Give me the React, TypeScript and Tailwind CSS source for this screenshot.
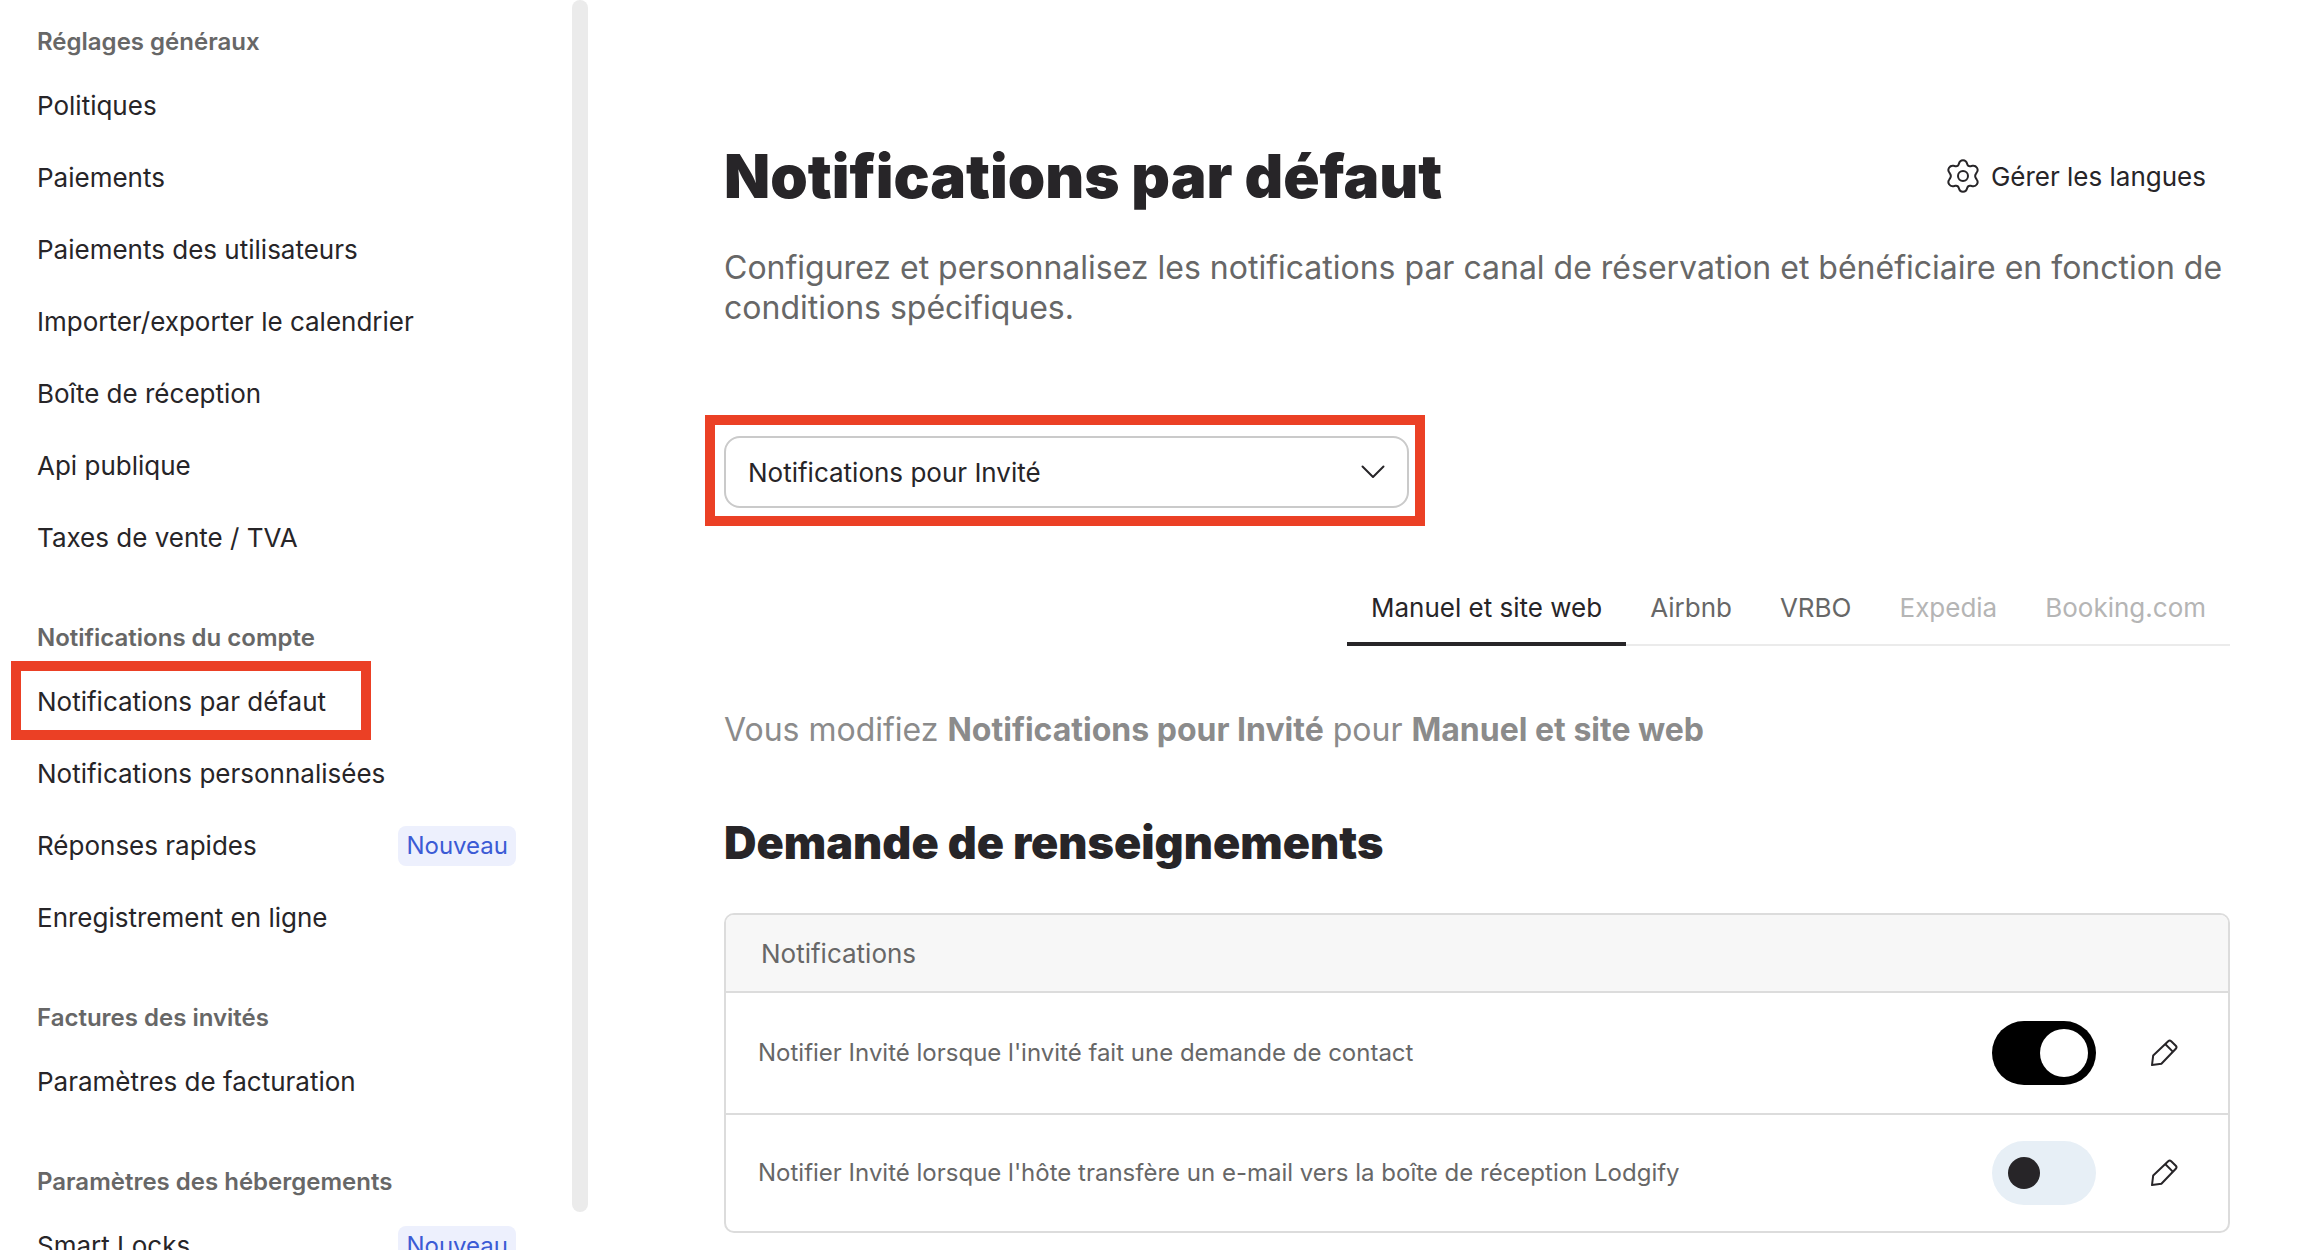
import { useState } from "react";

type Item = { label: string; isNew?: boolean; marked?: boolean };

const groups: { title: string; items: Item[] }[] = [
  {
    title: "Réglages généraux",
    items: [
      { label: "Politiques" },
      { label: "Paiements" },
      { label: "Paiements des utilisateurs" },
      { label: "Importer/exporter le calendrier" },
      { label: "Boîte de réception" },
      { label: "Api publique" },
      { label: "Taxes de vente / TVA" },
    ],
  },
  {
    title: "Notifications du compte",
    items: [
      { label: "Notifications par défaut", marked: true },
      { label: "Notifications personnalisées" },
      { label: "Réponses rapides", isNew: true },
      { label: "Enregistrement en ligne" },
    ],
  },
  { title: "Factures des invités", items: [{ label: "Paramètres de facturation" }] },
  { title: "Paramètres des hébergements", items: [{ label: "Smart Locks", isNew: true }] },
];

const tabs = [
  { label: "Manuel et site web" },
  { label: "Airbnb" },
  { label: "VRBO" },
  { label: "Expedia", disabled: true },
  { label: "Booking.com", disabled: true },
];

const notifications = [
  { id: "contact", label: "Notifier Invité lorsque l'invité fait une demande de contact", on: true },
  {
    id: "transfer",
    label: "Notifier Invité lorsque l'hôte transfère un e-mail vers la boîte de réception Lodgify",
    on: false,
  },
];

function GearIcon() {
  return (
    <svg viewBox="0 0 32 34" className="h-[34px] w-8" fill="none" stroke="currentColor" strokeWidth="2" strokeLinejoin="round" aria-hidden="true">
      <path d="M11.800 5C12.400 2.500 14 1.200 16 1.200S19.600 2.500 20.200 5c.4 1.600 1.900 2.500 3.500 2.200l1.800-.4c3.800-.7 6.600 3.600 4.200 6.700l-.7 1.100a4.200 4.200 0 0 0 0 4.800l.7 1.100c2.400 3.100-.4 7.400-4.200 6.700l-1.800-.4c-1.600-.3-3.100.6-3.500 2.200-.6 2.500-2.200 3.800-4.200 3.800s-3.600-1.300-4.200-3.800c-.4-1.600-1.900-2.500-3.500-2.200l-1.800.4c-3.800.7-6.600-3.600-4.200-6.700L3 19.400a4.200 4.200 0 0 0 0-4.800l-.7-1.100C-.1 10.400 2.700 6.100 6.500 6.800l1.800.4c1.600.3 3.100-.6 3.500-2.200Z" />
      <circle cx="16" cy="17" r="5" />
    </svg>
  );
}

function PencilIcon() {
  return (
    <svg viewBox="0 0 28 28" className="size-7" fill="none" stroke="currentColor" strokeWidth="2" strokeLinejoin="round" aria-hidden="true">
      <path d="M2 26l1.200-9.600L18.200 2.200a2.200 2.200 0 0 1 3 0l4.600 4.600a2.200 2.200 0 0 1 0 3L11.400 24.800 2 26Z" />
      <path d="M15.400 5.200l7.400 7.400" />
    </svg>
  );
}

function Sidebar() {
  return (
    <div className="flex h-full w-[588px] shrink-0 justify-between">
      <nav className="flex h-full w-[516px] flex-col gap-12 overflow-hidden pt-[26px] pl-[37px]">
        {groups.map((g) => (
          <section key={g.title} className="shrink-0">
            <h2 className="text-2xl font-semibold text-[#676767]">{g.title}</h2>
            <ul className="pt-3">
              {g.items.map((item) => (
                <li key={item.label} className="relative flex h-[72px] items-center justify-between">
                  <a href="#" className="text-[26px] leading-10 text-[#272528]">
                    {item.label}
                  </a>
                  {item.isNew && (
                    <span className="rounded-lg bg-[#edf0fd] px-2 py-1 text-2xl text-[#3b5bd5]">Nouveau</span>
                  )}
                  {item.marked && (
                    <span className="pointer-events-none absolute -top-[5px] -bottom-0.5 -left-[26px] w-[360px] border-10 border-[#eb4025]" />
                  )}
                </li>
              ))}
            </ul>
          </section>
        ))}
      </nav>
      <div className="mb-[38px] w-4 rounded-full bg-[#ebebeb]" />
    </div>
  );
}

function Toggle({ id, on, label, onChange }: { id: string; on: boolean; label: string; onChange: () => void }) {
  return (
    <label htmlFor={id} className={`flex h-16 w-[104px] cursor-pointer items-center rounded-full ${on ? "justify-end bg-black px-2" : "justify-start bg-[#e7eff6] px-4"}`}>
      <input id={id} type="checkbox" role="switch" aria-label={label} checked={on} onChange={onChange} className="sr-only" />
      <span className={`rounded-full ${on ? "size-12 bg-white" : "size-8 bg-[#272528]"}`} />
    </label>
  );
}

export default function App() {
  const [active, setActive] = useState(tabs[0].label);
  const [states, setStates] = useState(notifications.map((n) => n.on));

  return (
    <div className="flex h-screen overflow-hidden bg-white font-[Inter,sans-serif] text-[#272528]">
      <Sidebar />
      <main className="min-w-0 flex-1 pt-[136px] pr-[84px] pl-[136px]">
        <header className="flex h-20 items-center justify-between">
          <h1 className="text-[60px] leading-20 font-black">Notifications par défaut</h1>
          <button type="button" className="flex items-center gap-3 px-6 text-[26px]">
            <GearIcon />
            Gérer les langues
          </button>
        </header>
        <p className="pt-8 text-[32px] leading-10 text-[#676767]">
          Configurez et personnalisez les notifications par canal de réservation et bénéficiaire en fonction de conditions spécifiques.
        </p>

        <div className="relative mt-[108px] w-[685px]">
          <select aria-label="Destinataire des notifications" className="h-[72px] w-full appearance-none rounded-2xl border-2 border-[#cacaca] bg-white px-[22px] text-[26px]">
            <option>Notifications pour Invité</option>
          </select>
          <svg viewBox="0 0 24 14" className="pointer-events-none absolute top-[29px] right-6 h-3.5 w-6" fill="none" stroke="currentColor" strokeWidth="2" strokeLinecap="round" strokeLinejoin="round" aria-hidden="true">
            <path d="M1.500 1.500 12 12 22.500 1.500" />
          </svg>
          <span className="pointer-events-none absolute -top-[21px] -right-4 -bottom-[18px] -left-[19px] border-10 border-[#eb4025]" />
        </div>

        <div role="tablist" className="mt-[62px] ml-auto flex h-[76px] w-fit border-b-2 border-[#ebebeb]">
          {tabs.map((t) => (
            <button
              key={t.label}
              type="button"
              role="tab"
              aria-selected={active === t.label}
              disabled={t.disabled}
              onClick={() => setActive(t.label)}
              className={`-mb-0.5 border-b-4 px-6 pt-0.5 text-[26px] ${
                active === t.label ? "border-[#272528] text-[#272528]" : t.disabled ? "border-transparent text-[#b5b5b5]" : "border-transparent text-[#676767]"
              }`}
            >
              {t.label}
            </button>
          ))}
        </div>

        <p className="pt-16 text-[32px] leading-10 text-[#8b8b8b]">
          Vous modifiez <strong>Notifications pour Invité</strong> pour <strong>{active}</strong>
        </p>
        <h2 className="mt-[61px] text-[45px] leading-16 font-black">Demande de renseignements</h2>

        <div className="mt-[38px] overflow-hidden rounded-[10px] border-2 border-[#dcdcdc]">
          <table className="w-full border-separate border-spacing-0 text-left text-[#676767]">
            <thead>
              <tr>
                <th colSpan={3} className="h-[78px] border-b-2 border-[#dcdcdc] bg-[#f7f7f7] px-[35px] text-[26px] font-normal">
                  Notifications
                </th>
              </tr>
            </thead>
            <tbody>
              {notifications.map((n, i) => (
                <tr key={n.id} className="group">
                  <td className="h-[122px] border-b-2 border-[#dcdcdc] pl-8 text-2xl group-last:h-[116px] group-last:border-0">{n.label}</td>
                  <td className="w-[104px] border-b-2 border-[#dcdcdc] group-last:border-0">
                    <Toggle id={n.id} label={n.label} on={states[i]} onChange={() => setStates(states.map((s, j) => (j === i ? !s : s)))} />
                  </td>
                  <td className="w-[132px] border-b-2 border-[#dcdcdc] pl-[54px] text-[#272528] group-last:border-0">
                    <button type="button" aria-label={`Modifier : ${n.label}`} className="block">
                      <PencilIcon />
                    </button>
                  </td>
                </tr>
              ))}
            </tbody>
          </table>
        </div>
      </main>
    </div>
  );
}
